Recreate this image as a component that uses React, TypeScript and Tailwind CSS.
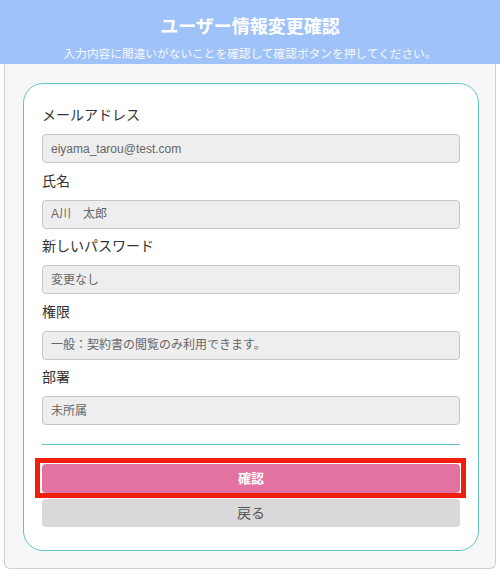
const fields = [
  { label: "メールアドレス", value: "eiyama_tarou@test.com" },
  { label: "氏名", value: "A川　太郎" },
  { label: "新しいパスワード", value: "変更なし" },
  { label: "権限", value: "一般：契約書の閲覧のみ利用できます。" },
  { label: "部署", value: "未所属" },
];

const App = () => {
  return (
    <div className="w-[500px] h-[573px] bg-white font-['Liberation_Sans','Noto_Sans_CJK_JP',sans-serif]">
      <header className="h-[64px] bg-[#9fc3f8] flex flex-col items-center text-white">
        <h1 className="mt-[16px] text-[18px] leading-[22px] font-bold">ユーザー情報変更確認</h1>
        <p className="mt-[8px] text-[11.7px] leading-[16px] text-[#f5f8ff]">
          入力内容に間違いがないことを確認して確認ボタンを押してください。
        </p>
      </header>

      <div className="mx-[4px] h-[505px] bg-[#f7f7f7] border-x border-b border-[#cfcfcf] rounded-b-[6px] pt-[19px]">
        <div className="ml-[18px] w-[456px] h-[468px] bg-white border border-[#66c2c4] rounded-[20px] px-[18px] pt-[20px] pb-[23px] flex flex-col">
          {fields.map((f, i) => (
            <div key={f.label} className={i < fields.length - 1 ? "mb-[6.5px]" : ""}>
              <label className="block h-[22px] leading-[22px] text-[14px] text-[#333]">{f.label}</label>
              <div className="mt-[8px] h-[29px] bg-[#eeeeee] border border-[#c6c6c6] rounded-[4px] px-[8px] flex items-center text-[12px] text-[#666]">
                {f.value}
              </div>
            </div>
          ))}

          <div className="mt-[19px] h-px bg-[#66c2c4]" />

          <div className="relative mt-[19px]">
            <button className="h-[29px] w-full bg-[#e272a0] rounded-[4px] text-white text-[13px] font-bold">
              確認
            </button>
            {/* highlight frame */}
            <span className="absolute -left-[7px] -right-[6px] -top-[6px] -bottom-[5px] border-[5px] border-[#ef1f0c]" />
          </div>
          <button className="mt-[6px] h-[28px] w-full bg-[#d9d9d9] rounded-[4px] text-[#555] text-[14px]">
            戻る
          </button>
        </div>
      </div>
    </div>
  );
};

export default App;
